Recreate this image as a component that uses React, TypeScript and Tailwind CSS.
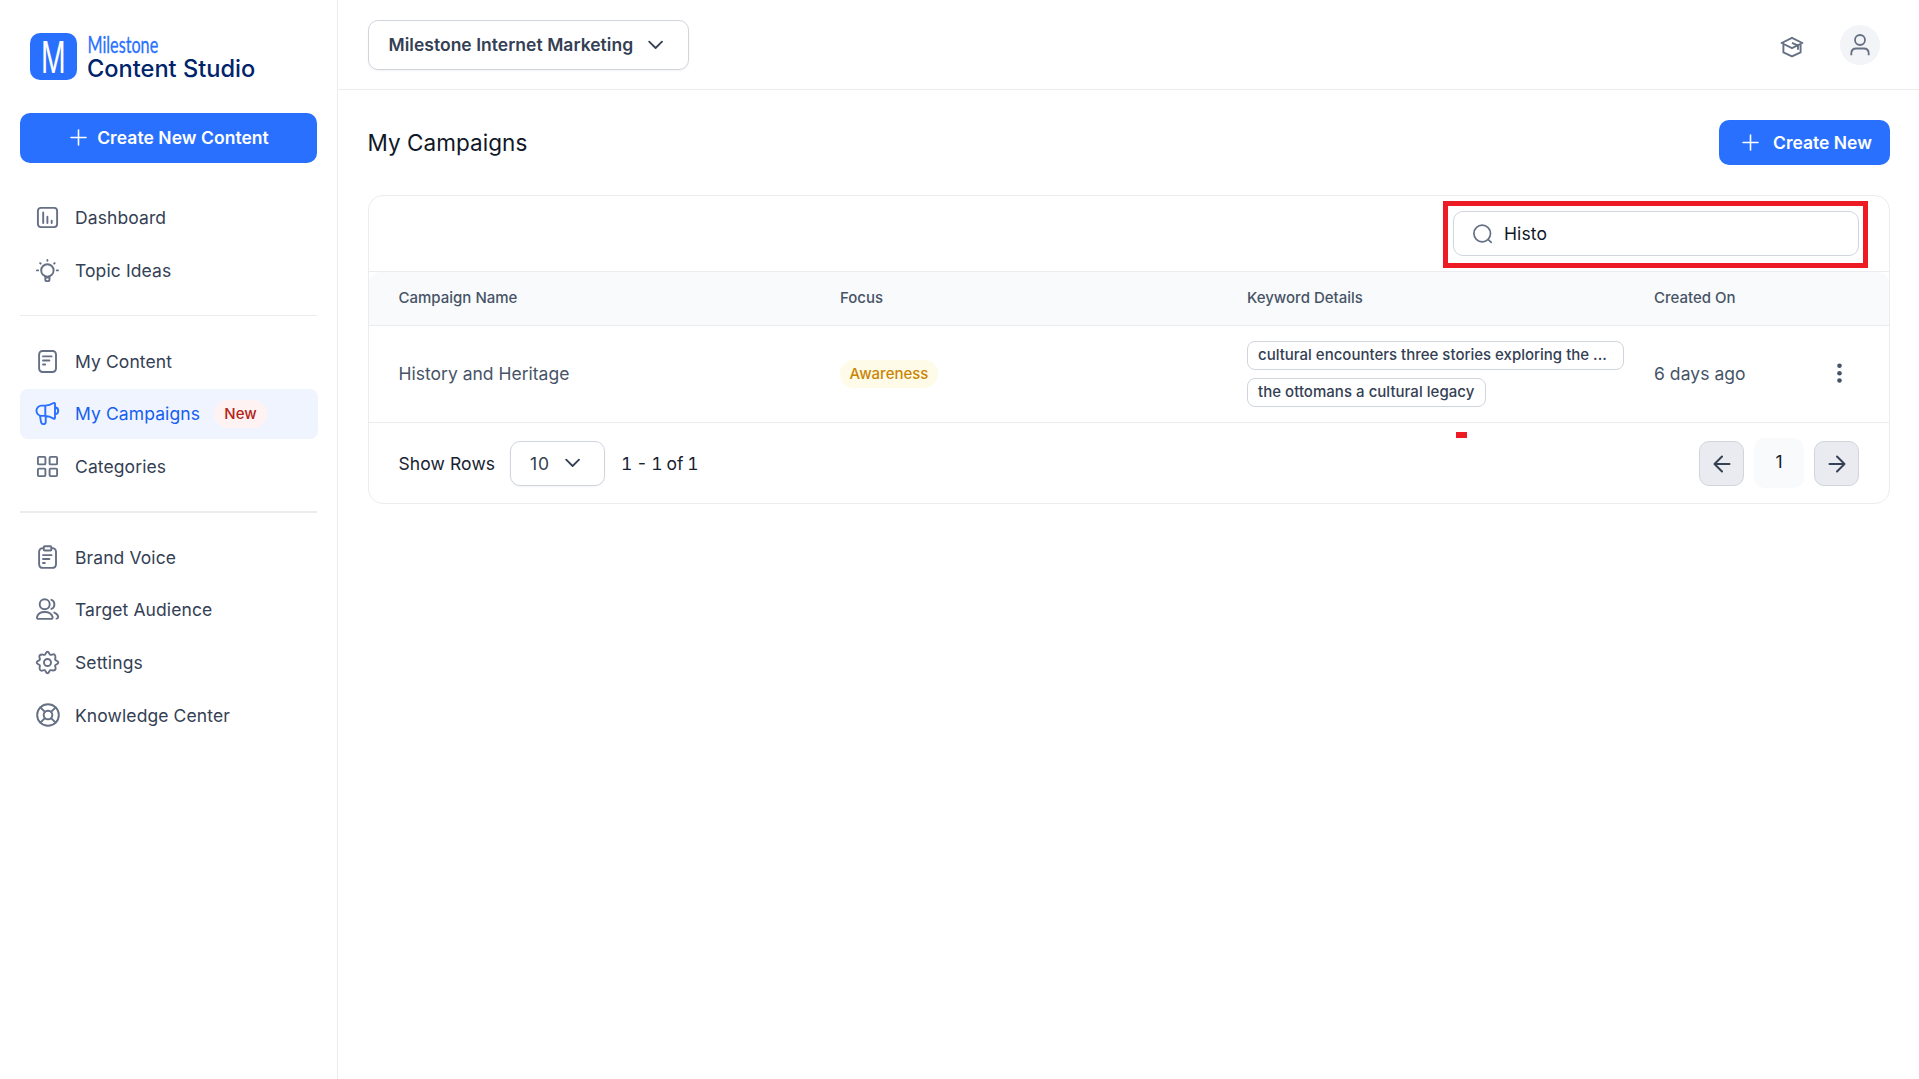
import type { ReactNode } from 'react'
import { LifeBuoy } from 'lucide-react'

function Icon({ children }: { children: ReactNode }) {
  return (
    <svg
      width="25"
      height="25"
      viewBox="0 0 25 25"
      fill="none"
      stroke="currentColor"
      strokeWidth="1.9"
      strokeLinecap="round"
      strokeLinejoin="round"
      className="shrink-0"
    >
      {children}
    </svg>
  )
}

const DashboardIcon = () => (
  <Icon>
    <rect x="2.9" y="2.9" width="19.2" height="19.2" rx="3" />
    <path d="M8.2 7.5V18M12.4 11.8V18M16.7 15.8V18" />
  </Icon>
)

const IdeaIcon = () => (
  <Icon>
    <circle cx="12.4" cy="12.4" r="6.2" />
    <path d="M10.3 18.4v3q0 1.7 1.7 1.7h.8q1.7 0 1.7-1.7v-3M10.3 19.6h4.2M12.4 1.9v.8M1.9 12.4h1.2M21.8 12.4H23M5.1 5.1l.6.6M19.7 5.1l-.6.6" />
  </Icon>
)

const ContentIcon = () => (
  <Icon>
    <rect x="4.1" y="2" width="16.9" height="21" rx="3.4" />
    <path d="M8 7.4h8.6M8 11.5h6.4M8 15.5h2.2" />
  </Icon>
)

const CampaignIcon = () => (
  <Icon>
    <path d="M10.3 4.6H6.6a5.1 5.1 0 0 0 0 10.3h3.7zM10.3 4.6C14 4.4 16.5 3.2 18.6 2q1.4-.6 1.4 1v13.6q0 1.6-1.4 1c-2.1-1.2-4.6-2.5-8.3-2.7M5 14.9l1.1 6.4q.4 1.8 2.2 1.8 2.4 0 2.4-2.2v-5.5M20 6.2c2 .2 3.2 1.8 3.2 3.6S22 13.2 20 13.4" />
  </Icon>
)

const CategoriesIcon = () => (
  <Icon>
    <rect x="2.9" y="2.9" width="7.5" height="7.5" rx="1" />
    <rect x="14.6" y="2.9" width="7.5" height="7.5" rx="1" />
    <rect x="2.9" y="14.6" width="7.5" height="7.5" rx="1" />
    <rect x="14.6" y="14.6" width="7.5" height="7.5" rx="1" />
  </Icon>
)

const VoiceIcon = () => (
  <Icon>
    <path d="M8.7 3.1h-.6q-4 0-4 4v11.8q0 4 4 4H17q4 0 4-4V7.1q0-4-4-4h-.6" />
    <rect x="8.7" y="1.3" width="7.7" height="4.2" rx="1" />
    <path d="M8 10.1h8.6M8 14h6.4M8 18h1.8" />
  </Icon>
)

const AudienceIcon = () => (
  <Icon>
    <circle cx="9.7" cy="7.2" r="5" />
    <path d="M2 20c.8-3.2 4-5 7.7-5s7 1.8 7.9 5q.3 1.9-1.5 1.9H3.5Q1.7 21.9 2 20zM16.4 2.8c2 .6 3 2.3 3 4.4s-1 4-3 4.7M19.3 15.6c2.2.8 3.7 2.4 3.9 4.3q0 1.5-1.6 1.7" />
  </Icon>
)

const SettingsIcon = () => (
  <Icon>
    <circle cx="12.5" cy="12.5" r="3.5" />
    <path d="M10.7 3.5q1.8-3.6 3.6 0 .7 2.1 2.7 1.1 3.8-1.3 3.4 3.4-1 2 1.1 2.7 3.6 1.8 0 3.6-2.1.7-1.1 2.7 1.3 3.8-3.4 3.4-2-1-2.7 1.1-1.8 3.6-3.6 0-.7-2.1-2.7-1.1-3.8 1.3-3.4-3.4 1-2-1.1-2.7-3.6-1.8 0-3.6 2.1-.7 1.1-2.7Q3.3 4.2 8 4.6q2 1 2.7-1.1z" />
  </Icon>
)

const HelpIcon = () => <LifeBuoy size={26} strokeWidth={1.8} className="-mx-[0.5px] shrink-0" />

function Plus() {
  return (
    <svg width="17" height="17" viewBox="0 0 17 17" fill="none" stroke="currentColor" strokeWidth="1.6" strokeLinecap="round">
      <path d="M8.5 1v15M1 8.5h15" />
    </svg>
  )
}

function Chevron() {
  return (
    <svg
      width="16"
      height="10"
      viewBox="0 0 16 10"
      fill="none"
      stroke="currentColor"
      strokeWidth="1.8"
      strokeLinecap="round"
      strokeLinejoin="round"
    >
      <path d="M1.2 1.7L7.6 8 14 1.7" />
    </svg>
  )
}

function Arrow({ flip }: { flip?: boolean }) {
  return (
    <svg
      width="18"
      height="18"
      viewBox="0 0 18 18"
      fill="none"
      stroke="currentColor"
      strokeWidth="2"
      strokeLinecap="round"
      strokeLinejoin="round"
      className={flip ? 'mt-px rotate-180' : 'mt-px'}
    >
      <path d="M16.5 9h-15M9 1.5L1.5 9 9 16.5" />
    </svg>
  )
}

type Item = { label: string; icon: () => ReactNode; active?: boolean; badge?: string }

const mainItems: Item[] = [
  { label: 'Dashboard', icon: DashboardIcon },
  { label: 'Topic Ideas', icon: IdeaIcon },
]

const contentItems: Item[] = [
  { label: 'My Content', icon: ContentIcon },
  { label: 'My Campaigns', icon: CampaignIcon, active: true, badge: 'New' },
  { label: 'Categories', icon: CategoriesIcon },
]

const settingItems: Item[] = [
  { label: 'Brand Voice', icon: VoiceIcon },
  { label: 'Target Audience', icon: AudienceIcon },
  { label: 'Settings', icon: SettingsIcon },
  { label: 'Knowledge Center', icon: HelpIcon },
]

function NavGroup({ items }: { items: Item[] }) {
  return (
    <ul className="flex flex-col gap-[2.6px]">
      {items.map(({ label, icon: ItemIcon, active, badge }) => (
        <li key={label}>
          <a
            className={`flex h-[50px] w-[298px] items-center rounded-lg pl-[15px] tracking-[0.1px] ${
              active ? 'bg-[#eff4ff] text-[#155eef]' : 'text-[#344054]'
            }`}
          >
            <span className={active ? 'text-[#2970ff]' : 'text-[#667085]'}>
              <ItemIcon />
            </span>
            <span className="ml-[15px]">{label}</span>
            {badge && (
              <span className="ml-[14px] flex h-7 w-[53px] items-center justify-center rounded-full bg-[#fef3f2] pb-px text-[15px] font-medium text-[#b42318]">
                {badge}
              </span>
            )}
          </a>
        </li>
      ))}
    </ul>
  )
}

function Sidebar() {
  return (
    <aside className="flex w-[338px] shrink-0 flex-col border-r border-[#eaecf0] pl-5">
      <div className="flex h-20 items-end gap-[11px] pl-[10px]">
        <svg width="47" height="47" viewBox="0 0 47 47" className="overflow-visible">
          <rect width="47" height="47" rx="10" fill="#2970ff" />
          <text
            transform="translate(11 39.5) scale(0.62 1)"
            fill="#fff"
            fontFamily="Inter, sans-serif"
            fontSize="44"
          >
            M
          </text>
        </svg>
        <div className="-mb-0.5 flex flex-col">
          <svg width="72" height="23" viewBox="0 0 72 23" className="overflow-visible">
            <text
              transform="translate(-0.5 20) scale(0.72 1)"
              fill="#2970ff"
              stroke="#2970ff"
              strokeWidth="0.3"
              fontFamily="Lato, sans-serif"
              fontSize="22.5"
            >
              Milestone
            </text>
          </svg>
          <span className="-ml-px text-[23.6px] leading-[26px] font-medium text-[#00246b]">Content Studio</span>
        </div>
      </div>

      <button className="mt-[33px] flex h-[50px] w-[297px] items-center justify-center gap-[10px] rounded-[10px] bg-[#2970ff] pb-px pl-[2px] font-semibold tracking-[0.05px] text-white">
        <Plus />
        Create New Content
      </button>

      <nav className="mt-[29.5px]">
        <NavGroup items={mainItems} />
        <div className="my-5 h-px w-[297px] bg-[#eaecf0]" />
        <NavGroup items={contentItems} />
        <div className="mt-5 mb-[19px] h-0.5 w-[297px] bg-[#eaecf0]" />
        <NavGroup items={settingItems} />
      </nav>
    </aside>
  )
}

function Header() {
  return (
    <header className="flex h-[90px] items-center justify-between border-b border-[#eaecf0] pr-[39px] pl-[30px]">
      <button className="flex h-[50px] w-[321px] items-center rounded-[10px] border border-[#d0d5dd] pl-[19.5px] font-semibold text-[#344054] shadow-xs">
        <span className="w-[259px] text-left tracking-[0.03px]">Milestone Internet Marketing</span>
        <Chevron />
      </button>
      <div className="flex items-center gap-[36px] text-[#667085]">
        <svg width="24" height="22" viewBox="0 0 24 22" fill="none" stroke="currentColor" strokeWidth="1.9" strokeLinejoin="round" className="mt-[4px]">
          <path d="M12 1.8L1.6 7 12 12.2 22.4 7zM3.4 8v8.4l8.6 4 8.6-4V8M12 6.8l6 2.8v4.2" />
        </svg>
        <div className="flex size-10 items-center justify-center rounded-full bg-[#f2f4f7]">
          <svg width="20" height="22" viewBox="0 0 20 22" fill="none" stroke="currentColor" strokeWidth="1.8" strokeLinejoin="round">
            <circle cx="10" cy="6" r="5" />
            <path d="M1.3 21.3v-1.8q0-5 5-5h7.4q5 0 5 5v1.8" />
          </svg>
        </div>
      </div>
    </header>
  )
}

function Tag({ children, className }: { children: ReactNode; className: string }) {
  return (
    <span className={`flex h-[29px] items-center rounded-lg border border-[#d0d5dd] pb-[3px] pl-[10px] text-[15px] font-medium whitespace-nowrap text-[#344054] ${className}`}>
      {children}
    </span>
  )
}

const columns = 'grid grid-cols-[441.5px_407px_407px_1fr] pl-[29.5px]'

function CampaignTable() {
  return (
    <section className="mt-[30px] flex h-[309px] flex-col rounded-[15px] border border-[#eaecf0]">
      <div className="flex h-[76px] items-start justify-end border-b border-[#eaecf0] pt-[5px] pr-[21px]">
        {/* Highlight around the search box */}
        <div className="flex h-[67px] w-[425px] items-start border-5 border-[#ed1c24] pt-[5px] pl-[5px]">
          <label className="flex h-[45px] w-[406px] items-center rounded-[10px] border border-[#d0d5dd] pl-[19px]">
            <svg width="20" height="20" viewBox="0 0 20 20" fill="none" stroke="#667085" strokeWidth="1.7" strokeLinecap="round">
              <circle cx="9.2" cy="9.5" r="8.3" />
              <path d="M15.3 15.6l2.9 2.7" />
            </svg>
            <input defaultValue="Histo" className="ml-[11px] w-80 tracking-[0.1px] text-[#101828] outline-none" />
          </label>
        </div>
      </div>

      <div className={`${columns} h-[54px] items-center rounded-t-[12px] border-b border-[#eaecf0] bg-[#f9fafb] pb-[3px] text-[15px] font-medium text-[#475467]`}>
        <span>Campaign Name</span>
        <span>Focus</span>
        <span>Keyword Details</span>
        <span>Created On</span>
      </div>

      <div className={`${columns} h-[97px] items-center border-b border-[#eaecf0] text-[#475467]`}>
        <span className="pb-0.5">History and Heritage</span>
        <span className="flex h-7 w-[98px] items-center justify-center rounded-full bg-[#fefbe8] pb-px text-[15px] font-medium text-[#ca8504]">
          Awareness
        </span>
        <div className="flex flex-col gap-2">
          <Tag className="w-[377px]">cultural encounters three stories exploring the ...</Tag>
          <Tag className="w-[239px] tracking-[0.03px]">the ottomans a cultural legacy</Tag>
        </div>
        <div className="flex items-center justify-between pr-[47px]">
          <span className="pb-0.5 tracking-[0.05px]">6 days ago</span>
          <svg width="5" height="20" viewBox="0 0 5 20" fill="#475467" className="-mt-0.5">
            <circle cx="2.5" cy="2.8" r="2.3" />
            <circle cx="2.5" cy="10.2" r="2.3" />
            <circle cx="2.5" cy="17.5" r="2.3" />
          </svg>
        </div>
      </div>

      <div className="relative flex flex-1 items-center justify-between pr-[30px] pl-[29.5px] text-[#182230]">
        <span className="absolute top-[9px] left-[1087px] h-[6px] w-[11px] bg-[#ed1c24]" />
        <div className="flex items-center">
          <span className="w-[111.5px] tracking-[0.1px]">Show Rows</span>
          <button className="flex h-[45px] w-[95px] items-center justify-between rounded-[10px] border border-[#d0d5dd] pr-[23px] pl-[19px] tracking-[0.8px] text-[#344054] shadow-xs">
            10
            <Chevron />
          </button>
          <span className="ml-4 tabular-nums [word-spacing:-0.9px]">1 - 1 of 1</span>
        </div>
        <div className="flex items-center gap-[10px]">
          <button className="flex size-[45px] items-center justify-center rounded-[10px] border border-[#d0d5dd] bg-[#eaebf0] text-[#344054]">
            <Arrow />
          </button>
          <span className="-mt-px flex size-[50px] items-center justify-center rounded-[10px] bg-[#f9fafb] pb-[3px]">1</span>
          <button className="flex size-[45px] items-center justify-center rounded-[10px] border border-[#d0d5dd] bg-[#eaebf0] text-[#344054]">
            <Arrow flip />
          </button>
        </div>
      </div>
    </section>
  )
}

export default function App() {
  return (
    <div className="flex h-screen bg-white font-['Inter',sans-serif] text-[17.5px] leading-[25px]">
      <Sidebar />
      <div className="flex flex-1 flex-col">
        <Header />
        <main className="pt-[30px] pr-[29px] pl-[30px]">
          <div className="flex h-[45px] items-center justify-between">
            <h1 className="-ml-[0.5px] text-[22.5px] tracking-[0.05px] text-[#101828]">My Campaigns</h1>
            <button className="flex h-[45px] w-[171px] items-center gap-[14px] rounded-[10px] bg-[#2970ff] pl-[23px] font-semibold text-white">
              <Plus />
              Create New
            </button>
          </div>
          <CampaignTable />
        </main>
      </div>
    </div>
  )
}
